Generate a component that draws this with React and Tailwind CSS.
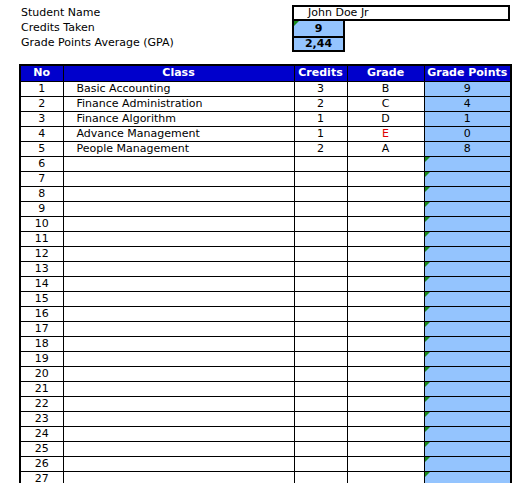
import React from "react";

const rows = [
  ["1", "Basic Accounting", "3", "B", "9"],
  ["2", "Finance Administration", "2", "C", "4"],
  ["3", "Finance Algorithm", "1", "D", "1"],
  ["4", "Advance Management", "1", "E", "0"],
  ["5", "People Management", "2", "A", "8"],
];
for (let i = 6; i <= 27; i++) rows.push([String(i), "", "", "", ""]);

function Flag() {
  return <span className="absolute left-0 top-0 w-0 h-0 border-t-[5px] border-r-[5px] border-t-[#1a8a1a] border-r-transparent" />;
}

export default function App() {
  return (
    <div className="w-[521px] h-[483px] overflow-hidden bg-white text-black text-[11px] leading-[14px]" style={{ fontFamily: '"DejaVu Sans", Verdana, sans-serif' }}>
      {/* summary */}
      <div className="flex pt-[5px] pl-[21px]">
        <div className="w-[271px] pt-[1px]">
          <div className="h-[15px]">Student Name</div>
          <div className="h-[15px]">Credits Taken</div>
          <div className="h-[15px]">Grade Points Average (GPA)</div>
        </div>
        <div>
          <div className="w-[218px] h-[16px] border-2 border-black pl-[14px] leading-[12px]">John Doe Jr</div>
          <div className="relative w-[53px] h-[15px] border-x-2 border-black bg-[#94c4fe] font-bold text-center leading-[15px]"><Flag />9</div>
          <div className="w-[53px] h-[16px] border-2 border-black bg-[#94c4fe] font-bold text-center leading-[12px]">2,44</div>
        </div>
      </div>

      <table className="mt-[12px] ml-[19px] border-collapse border-2 border-black table-fixed w-[491px]">
        <colgroup>
          <col className="w-[43px]" />
          <col className="w-[231px]" />
          <col className="w-[53px]" />
          <col className="w-[77px]" />
          <col className="w-[87px]" />
        </colgroup>
        <thead>
          <tr className="bg-[#0000cc] text-white font-bold h-[16px]">
            {["No", "Class", "Credits", "Grade", "Grade Points"].map((h) => (
              <th key={h} className="border border-black p-0 text-center leading-[14px]">{h}</th>
            ))}
          </tr>
        </thead>
        <tbody>
          {rows.map((r) => (
            <tr key={r[0]} className="h-[15px]">
              <td className="border border-black p-0 text-center leading-[13px]">{r[0]}</td>
              <td className="border border-black p-0 pl-[13px] leading-[13px]">{r[1]}</td>
              <td className="border border-black p-0 text-center leading-[13px]">{r[2]}</td>
              <td className={`border border-black p-0 text-center leading-[13px] ${r[3] === "E" ? "text-[#e00000]" : ""}`}>{r[3]}</td>
              <td className="relative border border-black p-0 text-center leading-[13px] bg-[#94c4fe]">
                {r[4] === "" && <Flag />}
                {r[4]}
              </td>
            </tr>
          ))}
        </tbody>
      </table>
    </div>
  );
}
